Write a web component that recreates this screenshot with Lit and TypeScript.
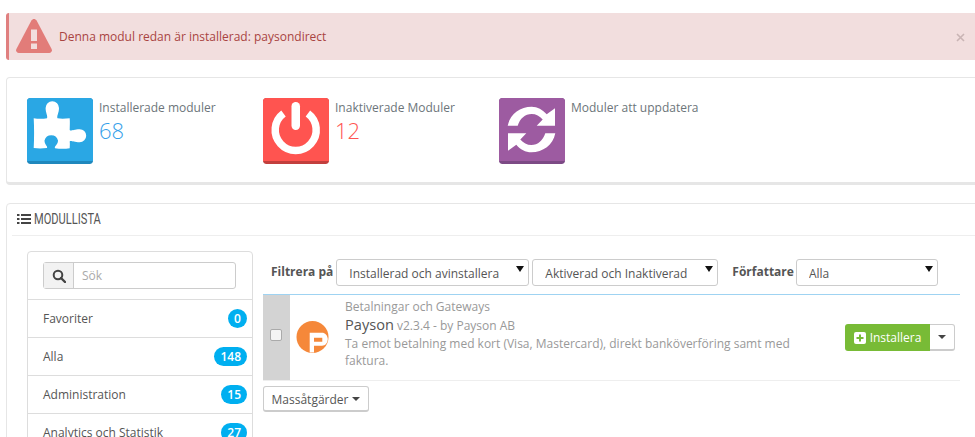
import { LitElement, html, css } from "lit";
import { customElement } from "lit/decorators.js";

@customElement("app-root")
export class AppRoot extends LitElement {
  static styles = css`
    :host { display: block; height: 437px; overflow: hidden; background: #fff; font-family: "Open Sans", sans-serif; font-size: 12px; color: #555; }
    * { box-sizing: border-box; }
    .page { width: 985px; padding: 13px 0 0 6px; display: flex; flex-direction: column; }
    .alert { height: 47px; background: #f2dede; border-left: 3px solid #e08080; border-radius: 3px 0 0 3px; display: flex; align-items: center; color: #a94442; padding-left: 7px; }
    .alert svg { width: 36px; height: 34px; margin-right: 7px; margin-top: -1px; }
    .alert .msg { flex: 1; }
    .close { width: 9px; height: 9px; margin-right: 20px; margin-top: 1px; color: #c9b4b4; }
    .close svg { display: block; width: 9px; height: 9px; margin: 0; }
    .stats { margin-top: 17px; height: 108px; background: #fff; border: 1px solid #e6e6e6; border-bottom-width: 3px; border-radius: 4px 0 0 4px; padding: 20px 0 0 20px; display: flex; }
    .stat { width: 236px; display: flex; gap: 6px; }
    .ico { width: 66px; height: 66px; border-radius: 3px; display: block; flex: none; }
    .stat .lab { margin-top: 1px; line-height: 17px; color: #6c757a; }
    .stat .num { font-size: 22px; font-weight: 300; line-height: 30px; margin-top: -1px; }
    .blue { color: #35a0ea; } .red { color: #ff5450; }
    .panel { margin-top: 18px; height: 300px; border: 1px solid #e6e6e6; border-radius: 4px 0 0 4px; padding: 0 0 0 5px; }
    .head { height: 32px; border-bottom: 1px solid #eee; display: flex; align-items: center; gap: 3px; padding-left: 5px; padding-bottom: 1px; color: #555; }
    .head svg { width: 14px; height: 12px; flex: none; }
    .head span { display: inline-block; font-family: "Roboto", sans-serif; font-size: 15px; transform: scaleX(.74); transform-origin: left center; white-space: nowrap; }
    .body { display: flex; padding: 15px 0 0 15px; }
    .side { width: 226px; height: 300px; border: 1px solid #ddd; border-radius: 4px; flex: none; }
    .search { height: 48px; padding: 10px 0 0 15px; border-bottom: 1px solid #ddd; }
    .group { width: 193px; height: 27px; border: 1px solid #ccc; border-radius: 3px; display: flex; }
    .addon { width: 30px; background: #f2f2f2; border-right: 1px solid #ccc; display: flex; align-items: center; justify-content: center; }
    .addon svg { width: 14px; height: 14px; }
    .ph { padding-left: 8px; line-height: 25px; color: #aaa; }
    .row { height: 38px; border-bottom: 1px solid #ddd; display: flex; align-items: center; justify-content: space-between; padding: 0 5px 0 15px; }
    .badge { background: #00aff0; color: #fff; border-radius: 10px; min-width: 19px; height: 19px; padding: 0 6px; line-height: 19px; text-align: center; font-size: 12px; font-weight: 600; }
    .main { margin-left: 10px; width: 697px; flex: none; }
    .filters { height: 43px; margin-top: 8px; display: flex; align-items: flex-start; }
    .filters b { font-weight: 700; line-height: 27px; color: #555; margin-top: -1px; white-space: nowrap; }
    .sel { position: relative; height: 27px; }
    .sel select { appearance: none; width: 100%; height: 27px; border: 1px solid #ccc; border-radius: 3px; background: #fff; padding: 2px 0 0 12px; font: inherit; color: #555; }
    .sel i { position: absolute; right: 5px; top: 7px; border-style: solid; border-width: 6px 4px 0; border-color: #111 transparent transparent; pointer-events: none; }
    .s1 { width: 193px; margin-left: 3px; margin-right: 3px; }
    .s2 { width: 186px; margin-right: 14px; }
    .s3 { width: 142px; margin-left: 2px; }
    .f1 { margin-left: 8px; }
    .table { margin-top: -8px; border-top: 1px solid #9fd3f2; border-bottom: 1px solid #eee; height: 87px; display: flex; }
    .chk { width: 27px; background: #d3d3d3; display: flex; justify-content: flex-start; padding: 34px 0 0 7px; }
    .chk span { width: 12px; height: 12px; border: 1px solid #aaa; border-radius: 2px; background: #f4f4f4; }
    .logo { width: 33px; height: 32px; margin: 26px 0 0 6px; flex: none; display: block; }
    .info { margin-left: 16px; width: 470px; padding-top: 3px; color: #999; line-height: 17px; }
    .info .name { line-height: 18px; margin: 0; }
    .info .name em { font-style: normal; font-size: 14.600px; color: #555; }
    .info p { margin: 0; }
    .acts { margin: 29px 0 0 30px; display: flex; height: 27px; }
    .inst { width: 85px; background: #78bb36; color: #fff; border-radius: 3px 0 0 3px; display: flex; align-items: center; justify-content: center; gap: 4px; }
    .inst svg { width: 12px; height: 12px; }
    .drop { width: 25px; border: 1px solid #ccc; border-left: 0; border-bottom-width: 2px; border-radius: 0 3px 3px 0; display: flex; align-items: center; justify-content: center; }
    .caret { display: inline-block; border-style: solid; border-width: 4px 4px 0; border-color: #444 transparent transparent; }
    .bulk { margin-top: 5px; width: 106px; height: 26px; padding-top: 1px; border: 1px solid #ccc; border-bottom-width: 2px; border-radius: 3px; display: flex; align-items: center; justify-content: center; gap: 4px; color: #555; }
  `;

  render() {
    const cats: [string, string][] = [["Favoriter", "0"], ["Alla", "148"], ["Administration", "15"], ["Analytics och Statistik", "27"]];
    return html`<div class="page">
      <div class="alert">
        <svg viewBox="0 0 36 34"><path fill="#e27c79" d="M18 0c1 0 2 .6 2.600 1.600L35.600 30c.9 1.900-.2 4-2.300 4H2.700C.6 34-.5 31.900.4 30L15.400 1.600C16 .6 17 0 18 0z"/><path fill="#f2dede" d="M15 10.500h6V22h-6zM15 24.500h6V30h-6z"/></svg>
        <span class="msg">Denna modul redan är installerad: paysondirect</span>
        <span class="close"><svg viewBox="0 0 9 9"><path d="M1 1l7 7M8 1L1 8" stroke="currentColor" stroke-width="1.600"/></svg></span>
      </div>
      <div class="stats">
        <div class="stat">
          <svg class="ico" viewBox="0 0 66 66"><rect width="66" height="66" rx="3" fill="#1f88bd"/><path d="M0 3a3 3 0 0 1 3-3h60a3 3 0 0 1 3 3v60H0z" fill="#2aa7e4"/><path fill="#fff" d="M6.700 20.300C11 21 16 21 20 20.300C21 18 18.600 15 18.600 10A6.700 6.700 0 0 1 32 10C32 15 29.500 18 30.500 20.300C34 21 38 20.800 42.700 20.300C43 24 42.800 28 42.700 32C44 33.500 46 31.200 52.700 31.200A6.500 6.500 0 0 1 52.700 44.200C46 44.200 44 42 42.700 43.500C43 46 42.800 48 42.700 50.300C38 51 33 51 28 50.300C27 48 31 47 31 42.500A7 7 0 0 0 17.500 42.500C17.500 47 21 48 20 50C15 50.500 11 50.500 6.700 50C7.200 40 7.200 30 6.700 20.300Z"/></svg>
          <div><div class="lab">Installerade moduler</div><div class="num blue">68</div></div>
        </div>
        <div class="stat">
          <svg class="ico" viewBox="0 0 66 66"><rect width="66" height="66" rx="3" fill="#c23f3d"/><path d="M0 3a3 3 0 0 1 3-3h60a3 3 0 0 1 3 3v60H0z" fill="#ff5450"/><path fill="none" stroke="#fff" stroke-width="7.500" d="M20.500 15.500a20.500 20.500 0 1 0 24.400 0"/><rect x="28.500" y="4" width="8.500" height="28" rx="4.200" fill="#fff"/></svg>
          <div><div class="lab">Inaktiverade Moduler</div><div class="num red">12</div></div>
        </div>
        <div class="stat">
          <svg class="ico" viewBox="0 0 66 66"><rect width="66" height="66" rx="3" fill="#7c4a85"/><path d="M0 3a3 3 0 0 1 3-3h60a3 3 0 0 1 3 3v60H0z" fill="#9d5ba1"/><g fill="#fff"><path d="M8.700 27.700C11 16 21 8.700 32.700 8.700C38.500 8.700 43.700 11.700 47.700 16.300L56 10.300V27.700H37.700L43.700 21.500C40.700 18 37 16 32.700 16C26 16 21 20.500 18.700 27.700Z"/><path transform="rotate(180 32.500 31.500)" d="M8.700 27.700C11 16 21 8.700 32.700 8.700C38.500 8.700 43.700 11.700 47.700 16.300L56 10.300V27.700H37.700L43.700 21.500C40.700 18 37 16 32.700 16C26 16 21 20.500 18.700 27.700Z"/></g></svg>
          <div><div class="lab">Moduler att uppdatera</div></div>
        </div>
      </div>
      <div class="panel">
        <div class="head">
          <svg viewBox="0 0 14 12" fill="#444"><path d="M0 1h2.500v2H0zM4 1h10v2H4zM0 5h2.500v2H0zM4 5h10v2H4zM0 9h2.500v2H0zM4 9h10v2H4z"/></svg>
          <span>MODULLISTA</span>
        </div>
        <div class="body">
          <div class="side">
            <div class="search"><div class="group">
              <div class="addon"><svg viewBox="0 0 14 14"><circle cx="6" cy="6" r="4.300" fill="none" stroke="#444" stroke-width="2"/><path d="M9 9l4 4" stroke="#444" stroke-width="2.400" stroke-linecap="round"/></svg></div>
              <div class="ph">Sök</div>
            </div></div>
            ${cats.map(([n, c]) => html`<div class="row"><span>${n}</span><span class="badge">${c}</span></div>`)}
          </div>
          <div class="main">
            <div class="filters">
              <b class="f1">Filtrera på</b>
              <div class="sel s1"><select><option>Installerad och avinstallera</option></select><i></i></div>
              <div class="sel s2"><select><option>Aktiverad och Inaktiverad</option></select><i></i></div>
              <b>Författare</b>
              <div class="sel s3"><select><option>Alla</option></select><i></i></div>
            </div>
            <div class="table">
              <div class="chk"><span></span></div>
              <svg class="logo" viewBox="0 0 33 32"><circle cx="16.500" cy="16" r="16" fill="#f5883a"/><path fill="#fff" fill-rule="evenodd" d="M13.700 11.700H26C29 11.700 31.500 14 31.800 18C31.500 22 29.500 24.700 26 24.700H18V31.500H13.700ZM18 16.700V20.700H26.300V16.700Z"/></svg>
              <div class="info">
                <div>Betalningar och Gateways</div>
                <div class="name"><em>Payson</em> v2.3.4 - by Payson AB</div>
                <p>Ta emot betalning med kort (Visa, Mastercard), direkt banköverföring samt med faktura.</p>
              </div>
              <div class="acts">
                <div class="inst"><svg viewBox="0 0 12 12"><rect width="12" height="12" rx="2" fill="#fff"/><path d="M5 2.500h2V5h2.500v2H7v2.500H5V7H2.500V5H5z" fill="#78bb36"/></svg>Installera</div>
                <div class="drop"><span class="caret"></span></div>
              </div>
            </div>
            <div class="bulk">Massåtgärder <span class="caret"></span></div>
          </div>
        </div>
      </div>
    </div>`;
  }
}
